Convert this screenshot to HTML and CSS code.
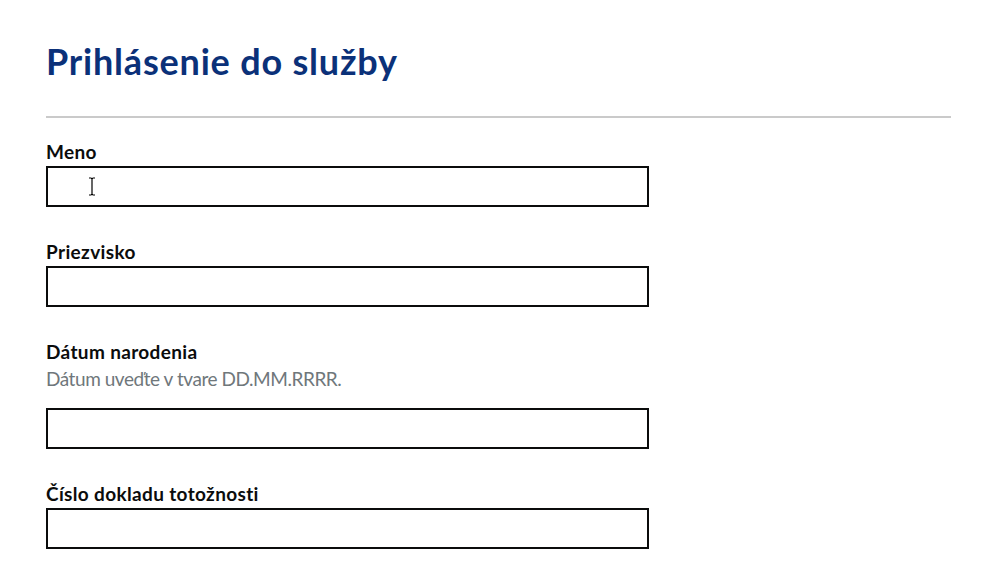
FILE: index.html
```html
<!DOCTYPE html>
<html lang="sk">
<head>
    <meta charset="UTF-8">
    <meta name="viewport" content="width=device-width, initial-scale=1.0">
    <title>Prihlásenie do služby</title>
    <link rel="stylesheet" href="styles.css">
</head>
<body>
    <div class="page">
        <div class="header">
            <h1>Prihlásenie do služby</h1>
        </div>
        <form class="form">
            <div class="form-group">
                <label class="label" for="meno">Meno</label>
                <div class="field">
                    <input class="input" id="meno" type="text">
                    <svg class="cursor" width="8" height="19" viewBox="0 0 8 19">
                        <path d="M1 1h2.5M4.5 1h2.5M4 1.5v16M1 18h2.5M4.5 18h2.5M3 1.5h2M3 17.5h2" stroke="#000" stroke-width="1.2" fill="none"/>
                    </svg>
                </div>
            </div>
            <div class="form-group">
                <label class="label" for="priezvisko">Priezvisko</label>
                <input class="input" id="priezvisko" type="text">
            </div>
            <div class="form-group">
                <label class="label" for="datum">Dátum narodenia</label>
                <span class="hint">Dátum uveďte v tvare DD.MM.RRRR.</span>
                <input class="input" id="datum" type="text">
            </div>
            <div class="form-group">
                <label class="label" for="doklad">Číslo dokladu totožnosti</label>
                <input class="input" id="doklad" type="text">
            </div>
        </form>
    </div>
</body>
</html>
```

FILE: styles.css
```css
body {
    margin: 0;
    background-color: #fff;
    color: #0b0c0c;
    font-family: Lato, "Open Sans", sans-serif;
}
.page {
    padding: 41px 49px 0 46px;
}
.header {
    border-bottom: 2px solid #cacaca;
    padding-bottom: 35px;
}
h1 {
    margin: 0;
    font-size: 36px;
    line-height: 40px;
    font-weight: 700;
    letter-spacing: 0.8px;
    color: #0b3179;
}
.form {
    padding-top: 21px;
}
.form-group {
    display: flex;
    flex-direction: column;
    gap: 2px;
    width: 66.67%;
    margin-bottom: 32px;
}
.label {
    font-size: 19px;
    line-height: 25px;
    font-weight: 700;
    letter-spacing: 0.35px;
}
.hint {
    font-size: 19px;
    line-height: 25px;
    letter-spacing: -0.45px;
    color: #6f777b;
    margin-bottom: 15px;
}
.field {
    position: relative;
}
.input {
    box-sizing: border-box;
    display: block;
    width: 100%;
    height: 41px;
    margin: 0;
    padding: 5px;
    border: 2px solid #0b0c0c;
    border-radius: 0;
    background: #fff;
    font-family: inherit;
    font-size: 19px;
}
.cursor {
    position: absolute;
    left: 42px;
    top: 11px;
}
```
